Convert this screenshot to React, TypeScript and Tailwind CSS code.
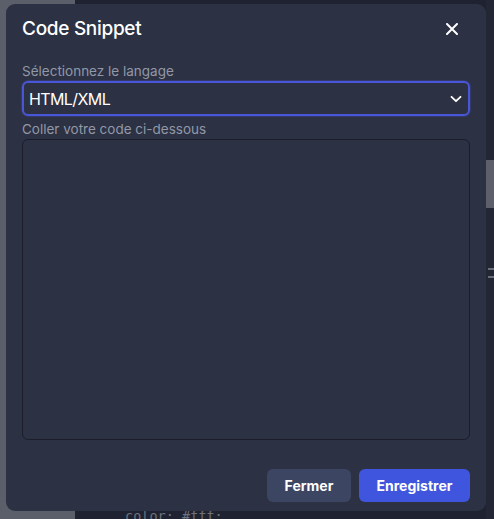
import { useState } from "react";

export default function App() {
    const [language, setLanguage] = useState("HTML/XML");
    const [code, setCode] = useState("");

    return (
        <div className="relative w-[494px] h-[519px] overflow-hidden flex bg-[#1f2331] font-['Inter','Liberation_Sans',sans-serif]">
            {/* Page behind the dialog */}
            <div className="w-[75px] h-full bg-[#5b5f6a]" />
            <div className="flex-1 h-full flex flex-col">
                <div className="flex-1" />
                <div className="h-[9px] pl-[50px] font-['DejaVu_Sans_Mono',monospace] text-[13.5px] leading-[14px] text-[#6d717c] overflow-hidden">
                    <div className="-mt-[1px]">color: #fff;</div>
                </div>
            </div>
            <div className="absolute right-0 top-0 w-[8px] h-full bg-[#232735]">
                <div className="mt-[160px] h-[48px] bg-[#5d606b]" />
                <div className="mt-[60px] ml-[2px] h-[2px] bg-[#6a6e79]" />
                <div className="mt-[6px] ml-[2px] h-[2px] bg-[#6a6e79]" />
            </div>

            {/* Dialog */}
            <div className="absolute left-[6px] top-[4px] w-[480px] h-[507px] rounded-[9px] bg-[#2c3144] flex flex-col">
                <div className="h-[50px] px-4 flex items-center justify-between">
                    <h2 className="text-[19px] font-medium text-white tracking-[-0.3px]">Code Snippet</h2>
                    <button className="w-[24px] h-[24px] flex items-center justify-center mr-[6px] text-white" aria-label="Fermer">
                        <svg width="12" height="12" viewBox="0 0 12 12" fill="none" stroke="currentColor" strokeWidth="2" strokeLinecap="round">
                            <path d="M1 1L11 11M11 1L1 11" />
                        </svg>
                    </button>
                </div>

                <div className="px-4 pt-[7px] flex flex-col">
                    <label className="text-[13.5px] leading-[20px] text-[#9298a6]">Sélectionnez le langage</label>
                    <div className="relative h-[35px] rounded-[6px] border-2 border-[#4a56d8] shadow-[0_0_0_1px_rgba(74,86,216,0.25)] flex items-center">
                        <select
                            value={language}
                            onChange={(e) => setLanguage(e.target.value)}
                            className="appearance-none w-full h-full bg-transparent pl-[5px] text-[16px] tracking-[-0.6px] text-white outline-none"
                        >
                            <option>HTML/XML</option>
                            <option>JavaScript</option>
                            <option>CSS</option>
                            <option>Python</option>
                        </select>
                        <svg className="absolute right-[6px] pointer-events-none text-white" width="12" height="8" viewBox="0 0 12 8" fill="none" stroke="currentColor" strokeWidth="1.8" strokeLinecap="round" strokeLinejoin="round">
                            <path d="M1.5 1.8L6 6.2L10.5 1.8" />
                        </svg>
                    </div>

                    <label className="mt-[3px] text-[13.5px] leading-[20px] text-[#9298a6]">Coller votre code ci-dessous</label>
                    <textarea
                        value={code}
                        onChange={(e) => setCode(e.target.value)}
                        className="h-[301px] resize-none rounded-[6px] border border-[#1b1e29] bg-[#2c3144] p-2 text-white outline-none"
                    />
                </div>

                <div className="mt-[29px] px-4 flex justify-end gap-2">
                    <button className="w-[84px] h-[33px] rounded-[6px] bg-[#3c4562] text-white text-[14px] font-bold">Fermer</button>
                    <button className="w-[111px] h-[33px] rounded-[6px] bg-[#3f55de] text-white text-[14px] font-bold">Enregistrer</button>
                </div>
            </div>
        </div>
    );
}
